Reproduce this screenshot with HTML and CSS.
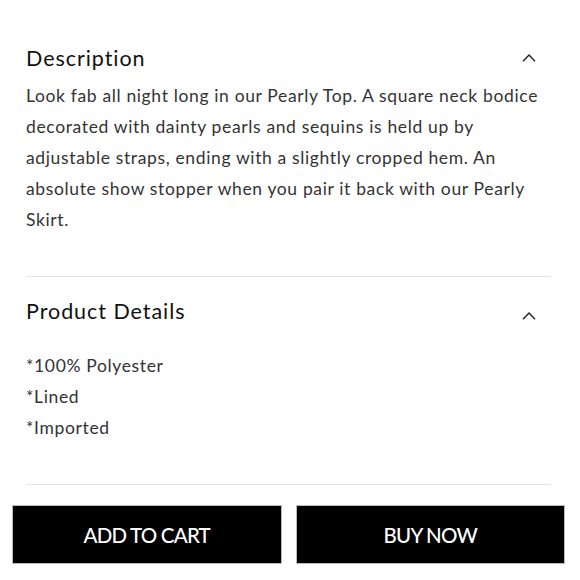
FILE: index.html
```html
<!DOCTYPE html>
<html lang="en">
<head>
<meta charset="utf-8">
<title>Pearly Top</title>
<link rel="stylesheet" href="styles.css">
</head>
<body>
<main class="page">
  <section class="panel panel-desc">
    <div class="panel-head">
      <h2 class="panel-title">Description</h2>
      <svg class="chev" width="14" height="8" viewBox="0 0 14 8"><path d="M1 7.2 L7 1 L13 7.2" fill="none" stroke="#222" stroke-width="1.4"/></svg>
    </div>
    <p class="panel-text">Look fab all night long in our Pearly Top. A square neck bodice decorated with dainty pearls and sequins is held up by adjustable straps, ending with a slightly cropped hem. An absolute show stopper when you pair it back with our Pearly Skirt.</p>
  </section>
  <section class="panel panel-details">
    <div class="panel-head">
      <h2 class="panel-title">Product Details</h2>
      <svg class="chev chev-low" width="14" height="8" viewBox="0 0 14 8"><path d="M1 7.2 L7 1 L13 7.2" fill="none" stroke="#222" stroke-width="1.4"/></svg>
    </div>
    <ul class="detail-list">
      <li>*100% Polyester</li>
      <li>*Lined</li>
      <li>*Imported</li>
    </ul>
  </section>
  <div class="actions">
    <button class="btn">ADD TO CART</button>
    <button class="btn">BUY NOW</button>
  </div>
</main>
</body>
</html>
```
FILE: styles.css
```css
* { box-sizing: border-box; }
html, body { margin: 0; padding: 0; background: #fff; }
body { font-family: Lato, "Noto Sans", sans-serif; color: #333; }
.page { padding-top: 40px; }
.panel { margin: 0 29px 0 26px; border-bottom: 1px solid #e4e4e4; }
.panel-desc { padding-bottom: 41px; }
.panel-details { padding-top: 16px; padding-bottom: 41px; }
.panel-head { display: flex; align-items: center; justify-content: space-between; height: 36px; padding-right: 15px; }
.panel-title { margin: 0; font-size: 21.5px; font-weight: 400; letter-spacing: 0.95px; color: #111; }
.chev { display: block; }
.chev-low { margin-top: 10px; }
.panel-text { margin: 4px 0 0; font-size: 17.5px; line-height: 31px; letter-spacing: 0.64px; }
.detail-list { list-style: none; margin: 21px 0 0; padding: 0; font-size: 17.5px; line-height: 31px; letter-spacing: 0.64px; }
.actions { display: flex; gap: 14px; padding: 20px 15px 0 12px; }
.btn { flex: 1; height: 59px; background: #000; color: #fff; border: 1px solid #bbb; font-family: Lato, sans-serif; font-size: 20.5px; font-weight: 500; letter-spacing: -0.8px; cursor: pointer; }
```
